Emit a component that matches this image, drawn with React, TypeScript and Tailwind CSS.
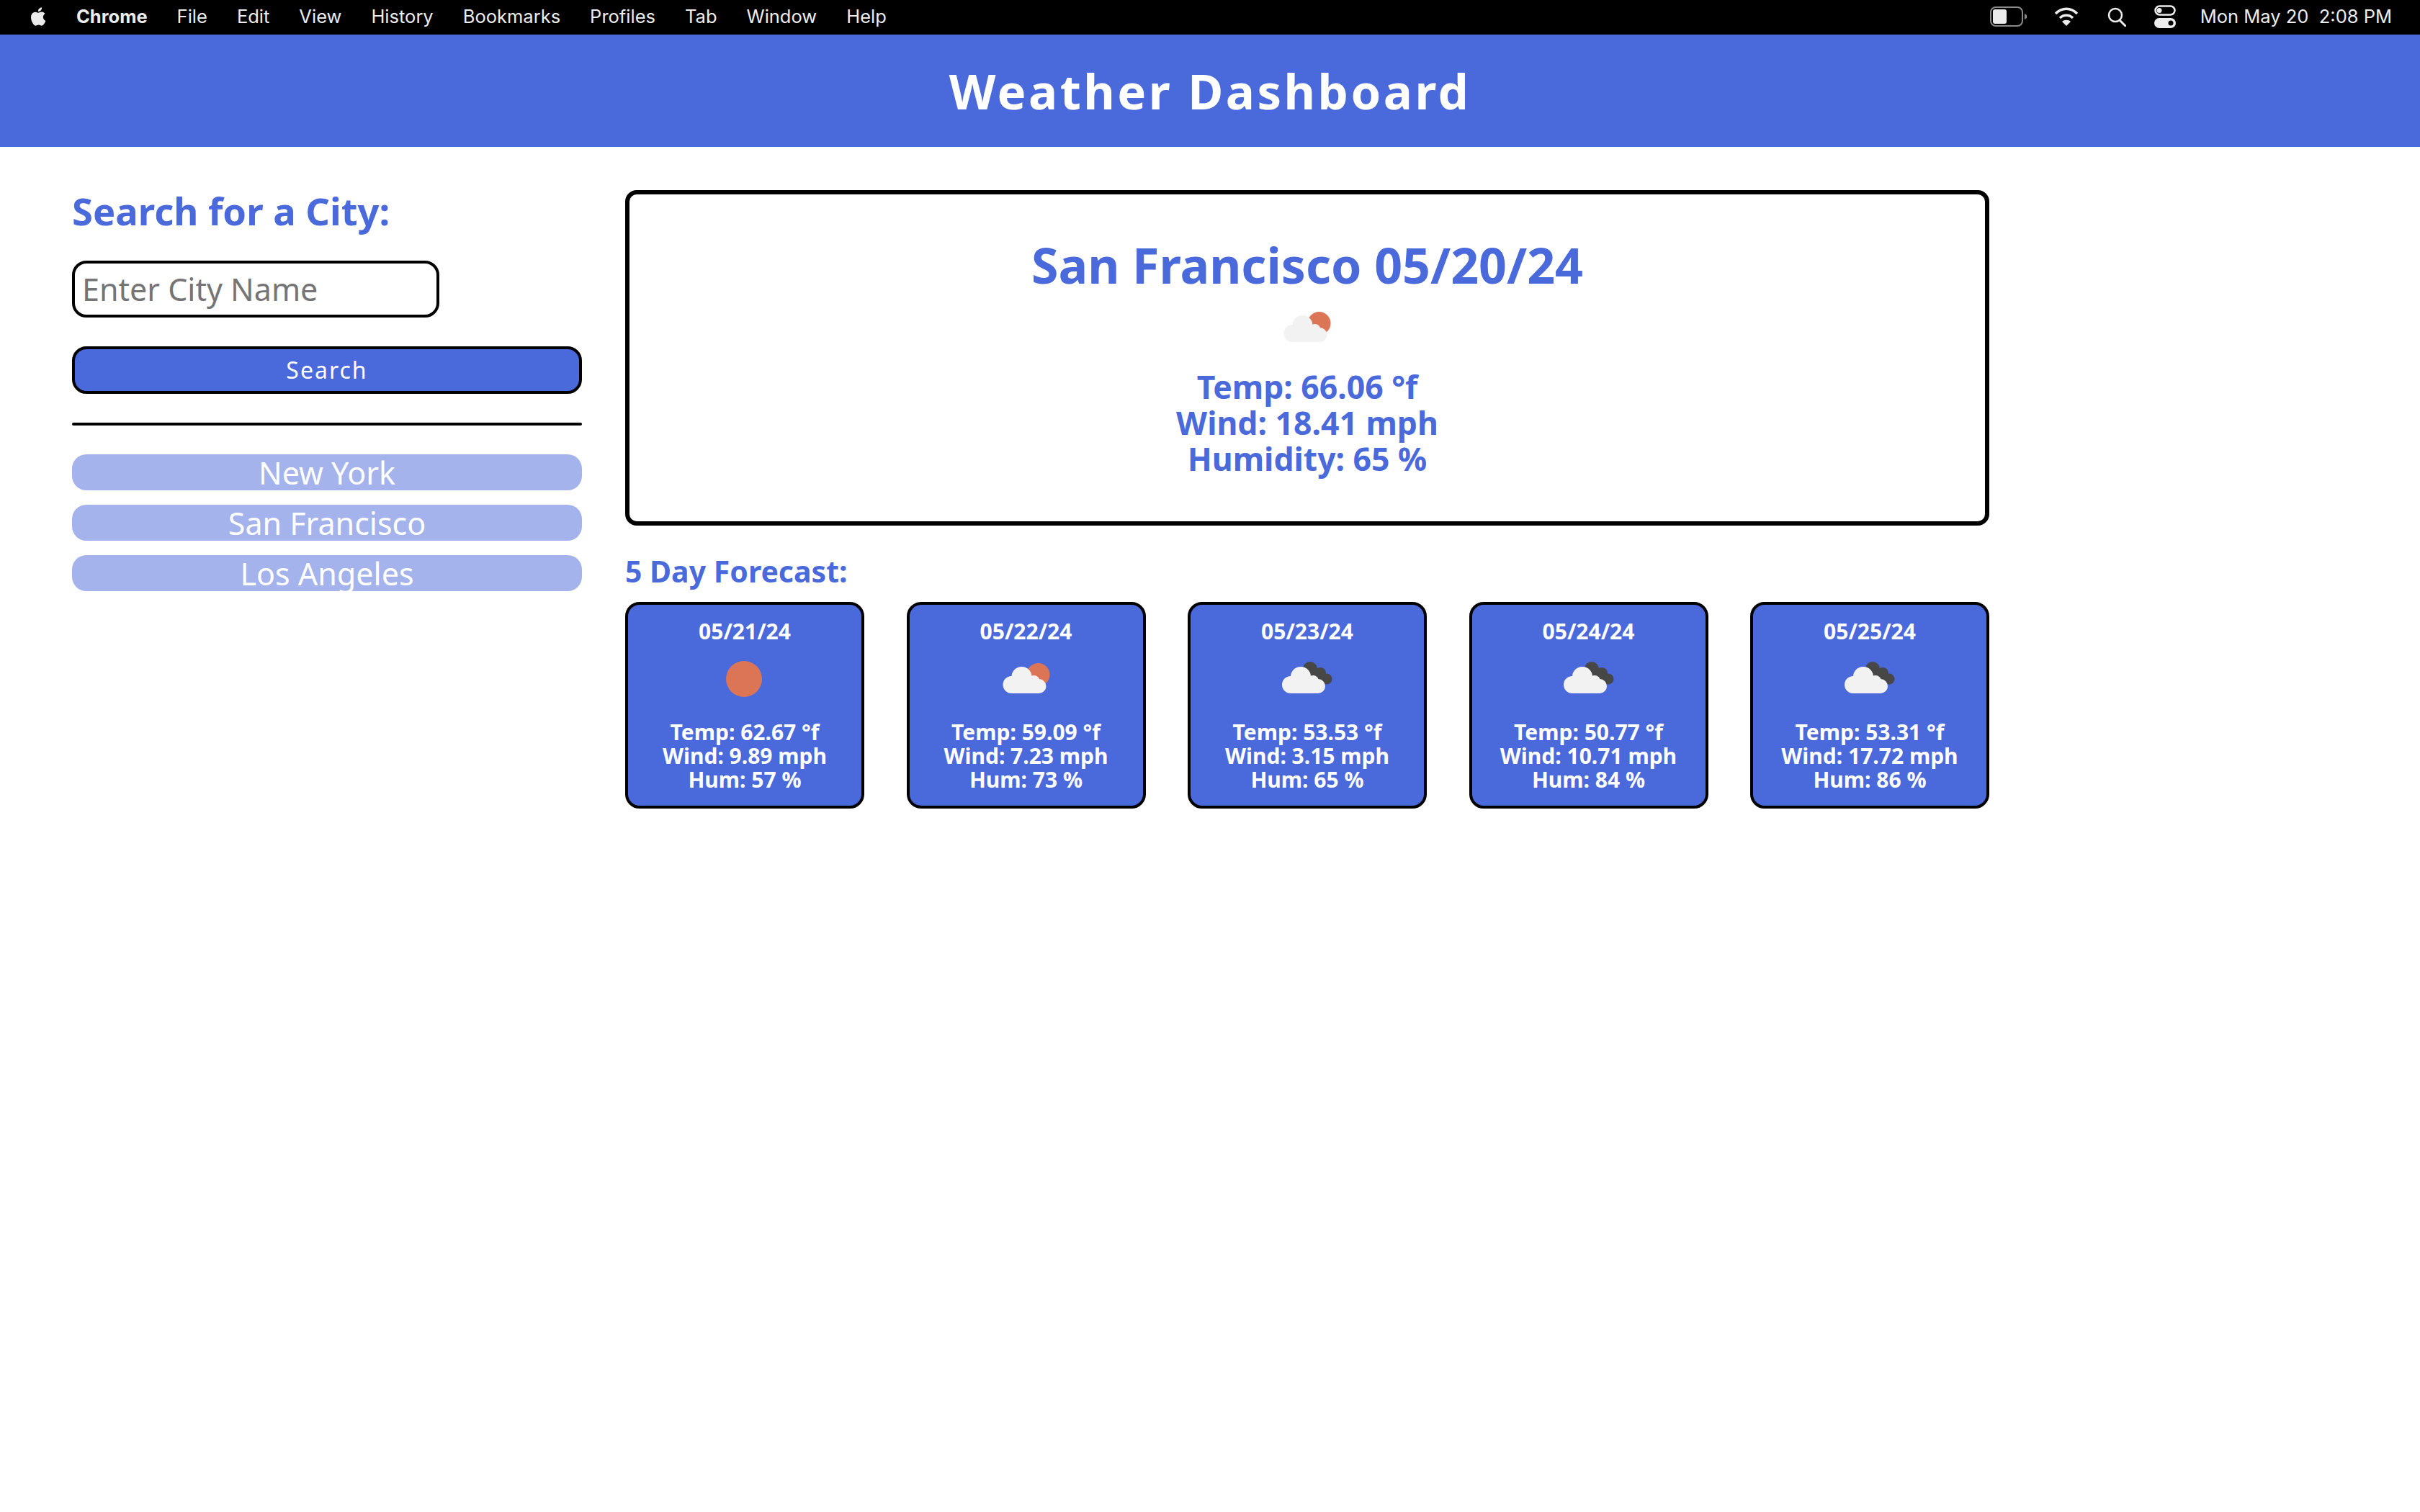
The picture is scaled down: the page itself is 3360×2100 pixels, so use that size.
import React from 'react';

type IconKind = 'sun' | 'few' | 'broken';

const Cloud = () => (
    <g fill="#f2f2f2">
        <circle cx="13" cy="33" r="12" />
        <circle cx="27" cy="22" r="14" />
        <circle cx="44" cy="28" r="8" />
        <circle cx="51" cy="35" r="10" />
        <rect x="13" y="28" width="38" height="17" />
    </g>
);

const WeatherIcon = ({ kind, className }: { kind: IconKind; className: string }) => {
    if (kind === 'sun') {
        return (
            <svg viewBox="0 0 80 50" className={className}>
                <circle cx="39" cy="25" r="25" fill="#dc7555" />
            </svg>
        );
    }
    return (
        <svg viewBox={kind === 'few' ? '-6.500 0 80 50' : '-4 0 80 50'} className={className}>
            {kind === 'few' ? (
                <circle cx="50" cy="19" r="16" fill="#dc7555" />
            ) : (
                <g fill="#474747">
                    <circle cx="40" cy="11" r="10" />
                    <circle cx="54" cy="17" r="8" />
                    <circle cx="63" cy="25" r="7.500" />
                    <path d="M36 8 L60 16 L62 30 L48 34 Z" />
                </g>
            )}
            <Cloud />
        </svg>
    );
};

const forecast: { date: string; icon: IconKind; temp: string; wind: string; hum: string }[] = [
    { date: '05/21/24', icon: 'sun', temp: '62.67', wind: '9.89', hum: '57' },
    { date: '05/22/24', icon: 'few', temp: '59.09', wind: '7.23', hum: '73' },
    { date: '05/23/24', icon: 'broken', temp: '53.53', wind: '3.15', hum: '65' },
    { date: '05/24/24', icon: 'broken', temp: '50.77', wind: '10.71', hum: '84' },
    { date: '05/25/24', icon: 'broken', temp: '53.31', wind: '17.72', hum: '86' },
];

const menuItems = ['File', 'Edit', 'View', 'History', 'Bookmarks', 'Profiles', 'Tab', 'Window', 'Help'];
const cities = ['New York', 'San Francisco', 'Los Angeles'];

const MenuBar = () => (
    <div className="flex h-[48px] items-center justify-between bg-black pb-[2px] pl-[40px] pr-[39px] font-['Inter',sans-serif] text-[25.500px] text-[#ececec]">
        <div className="flex items-center gap-[41px]">
            <div className="flex items-center gap-[38px]">
                <svg viewBox="0 0 24 28" className="h-[30px] w-[28px]" fill="#ececec">
                    <path d="M17.5 14.8c0-3 2.4-4.4 2.5-4.5-1.4-2-3.500-2.300-4.300-2.300-1.800-.2-3.500 1.100-4.400 1.100-.9 0-2.300-1-3.800-1-2 0-3.800 1.100-4.800 2.900-2 3.600-.5 8.900 1.500 11.800 1 1.400 2.200 3 3.700 3 1.500-.1 2-1 3.800-1 1.800 0 2.300 1 3.800 1 1.600 0 2.600-1.400 3.600-2.900 1.100-1.700 1.600-3.300 1.600-3.400-.1 0-3.200-1.200-3.200-4.700zM14.600 5.900c.8-1 1.400-2.400 1.200-3.900-1.200.1-2.700.8-3.500 1.800-.8.9-1.500 2.300-1.300 3.700 1.400.1 2.800-.7 3.600-1.600z" />
                </svg>
                <span className="font-bold">Chrome</span>
            </div>
            {menuItems.map((item) => (
                <span key={item}>{item}</span>
            ))}
        </div>
        <div className="flex items-center">
            <svg viewBox="0 0 52 28" className="h-[28px] w-[52px]">
                <rect x="1" y="1" width="44" height="26" rx="7" fill="none" stroke="#8a8a8a" strokeWidth="2" />
                <rect x="4" y="4" width="19" height="20" rx="3" fill="#ececec" />
                <path d="M48 10 L51 12 V16 L48 18 Z" fill="#8a8a8a" />
            </svg>
            <svg viewBox="0 0 34 28" className="ml-[37px] h-[28px] w-[34px]" fill="none" stroke="#ececec" strokeWidth="3.500">
                <path d="M2 10 C11 1 23 1 32 10" />
                <path d="M8 16 C13 11 21 11 26 16" />
                <path d="M17 27 L11 21 C14 18 20 18 23 21 Z" fill="#ececec" stroke="none" />
            </svg>
            <svg viewBox="0 0 26 28" className="ml-[40px] h-[28px] w-[26px]" fill="none" stroke="#ececec" strokeWidth="2.500">
                <circle cx="11" cy="12" r="9" />
                <path d="M17 19 L25 27" strokeLinecap="round" strokeWidth="3" />
            </svg>
            <svg viewBox="0 0 30 32" className="ml-[39px] h-[32px] w-[30px]">
                <rect x="1.500" y="1.500" width="27" height="12" rx="6" fill="none" stroke="#ececec" strokeWidth="2.500" />
                <circle cx="7" cy="7.500" r="3.500" fill="#ececec" />
                <rect x="0" y="18" width="30" height="14" rx="7" fill="#ececec" />
                <circle cx="23" cy="25" r="3.500" fill="#000" />
            </svg>
            <span className="ml-[34px] whitespace-pre">Mon May 20  2:08 PM</span>
        </div>
    </div>
);

const ForecastCard = ({ date, icon, temp, wind, hum }: (typeof forecast)[number]) => (
    <div className="flex h-[287px] w-[332px] flex-col items-center rounded-[20px] border-4 border-black bg-[#4a69db] pt-[20px] text-center text-[30px] font-bold leading-[33px] text-white">
        <div>{date}</div>
        <WeatherIcon kind={icon} className="mt-[25px] h-[50px] w-[80px]" />
        <div className="mt-[32px]">
            <div>Temp: {temp} °f</div>
            <div>Wind: {wind} mph</div>
            <div>Hum: {hum} %</div>
        </div>
    </div>
);

export default function App() {
    return (
        <div className="min-h-[2100px] bg-white font-['Noto_Sans',sans-serif]">
            <MenuBar />

            <header className="flex h-[156px] items-center justify-center bg-[#4a69db]">
                <h1 className="text-[67px] font-bold tracking-[3.500px] text-white">Weather Dashboard</h1>
            </header>

            <div className="flex gap-[60px] pl-[100px] pr-[598px] pt-[59px]">
                {/* Search column */}
                <aside className="w-[708px]">
                    <h2 className="text-[52.500px] font-bold leading-[60px] text-[#4a69db]">Search for a City:</h2>
                    <input
                        placeholder="Enter City Name"
                        className="mt-[39px] block h-[79px] w-[510px] rounded-[20px] border-4 border-black px-[10px] text-[43px] text-black placeholder:text-[#757575]"
                    />
                    <button className="mt-[40px] block h-[66px] w-full rounded-[20px] border-4 border-black bg-[#4a69db] text-[32px] tracking-[2px] text-white">
                        Search
                    </button>
                    <div className="mt-[40px] h-[4px] rounded-full bg-black" />
                    <div className="mt-[40px] flex flex-col gap-[20px]">
                        {cities.map((city) => (
                            <div key={city} className="h-[50px] rounded-[20px] bg-[#a5b3ec] text-center text-[43px] leading-[52px] text-white">
                                {city}
                            </div>
                        ))}
                    </div>
                </aside>

                {/* Current weather + forecast */}
                <main className="flex-1">
                    <section className="mt-[1px] flex h-[466px] flex-col items-center rounded-[16px] border-[6px] border-black pt-[62px] text-[#4a69db]">
                        <h2 className="text-[68px] font-bold leading-[72px]">San Francisco 05/20/24</h2>
                        <WeatherIcon kind="few" className="mt-[26px] h-[50px] w-[80px]" />
                        <div className="mt-[32px] text-center text-[44.500px] font-bold leading-[50px]">
                            <div>Temp: 66.06 °f</div>
                            <div>Wind: 18.41 mph</div>
                            <div>Humidity: 65 %</div>
                        </div>
                    </section>

                    <h3 className="mt-[38px] text-[41px] font-bold leading-[50px] text-[#4a69db]">5 Day Forecast:</h3>

                    <div className="mt-[18px] flex justify-between">
                        {forecast.map((day) => (
                            <ForecastCard key={day.date} {...day} />
                        ))}
                    </div>
                </main>
            </div>
        </div>
    );
}
